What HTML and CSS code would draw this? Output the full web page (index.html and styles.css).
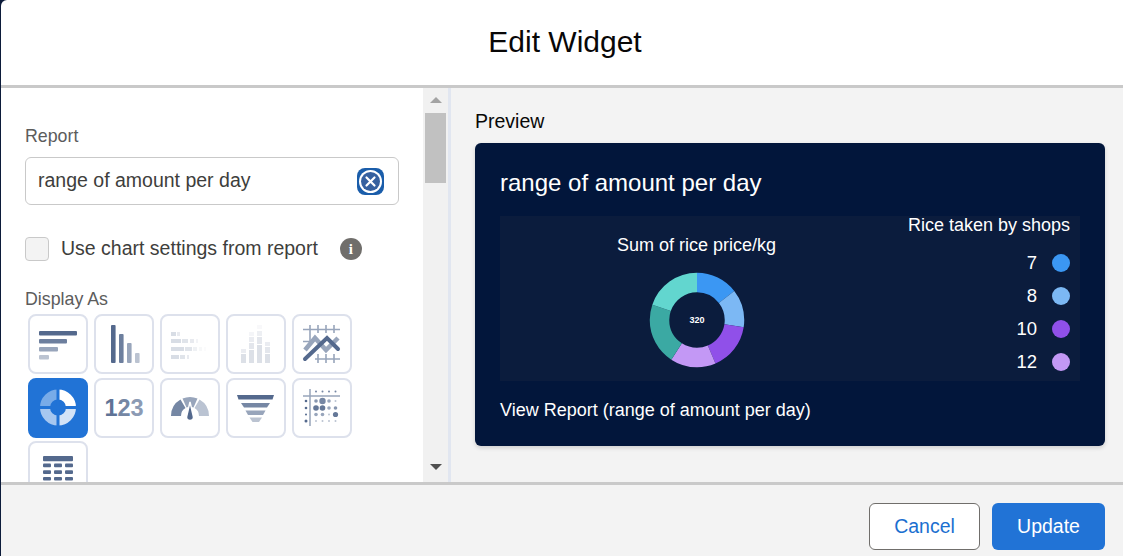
FILE: index.html
```html
<!DOCTYPE html>
<html lang="en">
<head>
    <meta charset="UTF-8">
    <meta name="viewport" content="width=device-width, initial-scale=1.0">
    <title>Edit Widget</title>
    <link rel="stylesheet" href="styles.css">
</head>
<body>
    <div class="modal">
        <div class="modal-header">Edit Widget</div>
        <div class="modal-body">
            <div class="settings">
                <label class="field-label">Report</label>
                <div class="report-input">
                    <span class="report-value">range of amount per day</span>
                    <button class="clear-button"><span class="clear-circle">
                        <svg width="13" height="13" viewBox="0 0 13 13"><path d="M2.5 2.5l8 8M10.5 2.5l-8 8" stroke="#fff" stroke-width="2.2" stroke-linecap="round"/></svg>
                    </span></button>
                </div>
                <div class="use-settings">
                    <span class="checkbox"></span>
                    <span class="use-settings-text">Use chart settings from report</span>
                    <span class="info-icon">i</span>
                </div>
                <div class="field-label display-label">Display As</div>
                <div class="chart-types">
                    <!-- bar -->
                    <div class="chart-type">
                        <svg viewBox="0 0 56 56" class="type-icon" fill="#54698d">
                            <rect x="9" y="15" width="38" height="4.6" rx="1"/>
                            <rect x="9" y="23" width="28" height="4.6" rx="1" opacity=".85"/>
                            <rect x="9" y="31" width="19" height="4.6" rx="1" opacity=".6"/>
                            <rect x="9" y="39" width="10" height="4.6" rx="1" opacity=".4"/>
                        </svg>
                    </div>
                    <!-- column -->
                    <div class="chart-type">
                        <svg viewBox="0 0 56 56" class="type-icon" fill="#54698d">
                            <rect x="15" y="9" width="4.6" height="38" rx="1"/>
                            <rect x="23" y="18" width="4.6" height="29" rx="1" opacity=".85"/>
                            <rect x="31" y="27" width="4.6" height="20" rx="1" opacity=".6"/>
                            <rect x="39" y="37" width="4.6" height="10" rx="1" opacity=".4"/>
                        </svg>
                    </div>
                    <!-- stacked bar -->
                    <div class="chart-type">
                        <svg viewBox="0 0 56 56" class="type-icon" fill="#54698d">
                            <g opacity=".22">
                                <rect x="9" y="16" width="5" height="4"/><rect x="15" y="16" width="3" height="4" opacity=".6"/>
                                <rect x="9" y="23" width="10" height="4"/><rect x="20" y="23" width="6" height="4" opacity=".8"/><rect x="28" y="23" width="4" height="4" opacity=".6"/><rect x="34" y="23" width="2" height="4" opacity=".3"/>
                                <rect x="9" y="31" width="13" height="4"/><rect x="23" y="31" width="7" height="4" opacity=".8"/><rect x="31" y="31" width="4" height="4" opacity=".4"/><rect x="37" y="31" width="3" height="4" opacity=".2"/><rect x="42" y="31" width="2" height="4" opacity=".1"/>
                                <rect x="9" y="39" width="8" height="4"/><rect x="18" y="39" width="5" height="4" opacity=".8"/><rect x="25" y="39" width="2" height="4" opacity=".6"/>
                            </g>
                        </svg>
                    </div>
                    <!-- stacked column -->
                    <div class="chart-type">
                        <svg viewBox="0 0 56 56" class="type-icon" fill="#54698d">
                            <g opacity=".2">
                                <rect x="13" y="38" width="5" height="9"/><rect x="13" y="33" width="5" height="4" opacity=".6"/>
                                <rect x="21" y="34" width="5" height="13"/><rect x="21" y="27" width="5" height="6" opacity=".8"/><rect x="21" y="21" width="5" height="5" opacity=".6"/><rect x="21" y="16" width="5" height="4" opacity=".3"/>
                                <rect x="29" y="29" width="5" height="18"/><rect x="29" y="21" width="5" height="7" opacity=".8"/><rect x="29" y="15" width="5" height="5" opacity=".5"/><rect x="29" y="9" width="5" height="4" opacity=".2"/>
                                <rect x="37" y="38" width="5" height="9"/><rect x="37" y="31" width="5" height="6" opacity=".8"/><rect x="37" y="26" width="5" height="4" opacity=".6"/>
                            </g>
                        </svg>
                    </div>
                    <!-- line -->
                    <div class="chart-type">
                        <svg viewBox="0 0 56 56" class="type-icon">
                            <g stroke="#98a5bb" stroke-width="1.6" fill="none">
                                <path d="M9 13.5h37M9 25.5h7M16 9v17M24 9v8M32 9v8M40 9v8"/>
                                <path d="M21 43h25M24 38v9M32 38v9M40 38v9"/>
                            </g>
                            <path d="M11 34L21 22L32 34L44 22" stroke="#98a5bb" stroke-width="4.5" fill="none"/>
                            <path d="M11 43L33 22L44 33" stroke="#54698d" stroke-width="4" fill="none" stroke-linecap="round"/>
                        </svg>
                    </div>
                    <!-- donut, selected -->
                    <div class="chart-type selected">
                        <svg viewBox="0 0 56 56" class="type-icon">
                            <g fill="none" stroke-width="10" transform="rotate(-90 28 27.5)">
                                <circle cx="28" cy="27.5" r="13" stroke="#fff" pathLength="4" stroke-dasharray="1 3"/>
                                <circle cx="28" cy="27.5" r="13" stroke="#d3e3f7" pathLength="4" stroke-dasharray="1 3" stroke-dashoffset="-1"/>
                                <circle cx="28" cy="27.5" r="13" stroke="#a6c7f0" pathLength="4" stroke-dasharray="1 3" stroke-dashoffset="-2"/>
                                <circle cx="28" cy="27.5" r="13" stroke="#78abe8" pathLength="4" stroke-dasharray="1 3" stroke-dashoffset="-3"/>
                            </g>
                            <path d="M28 8v39M8 27.5h40" stroke="#2173d6" stroke-width="3"/>
                        </svg>
                    </div>
                    <!-- metric -->
                    <div class="chart-type">
                        <svg viewBox="0 0 56 56" class="type-icon">
                            <text x="28" y="36" text-anchor="middle" class="metric-text"><tspan fill="#5f7396">1</tspan><tspan fill="#7587a4">2</tspan><tspan fill="#8c9bb4">3</tspan></text>
                        </svg>
                    </div>
                    <!-- gauge -->
                    <div class="chart-type">
                        <svg viewBox="0 0 56 56" class="type-icon">
                            <path d="M9 36a19 19 0 0 1 9.5-16.5l5 8.5a9 9 0 0 0-4.500 8z" fill="#7587a4"/>
                            <path d="M20.500 18.500a19 19 0 0 1 15 0l-4 9a9 9 0 0 0-7 0z" fill="#98a5bb"/>
                            <path d="M37.500 19.500a19 19 0 0 1 9.500 16.500h-10a9 9 0 0 0-4.500-8z" fill="#bac3d2"/>
                            <path d="M28 22l3.500 15a3.500 3.500 0 0 1-7 0z" fill="#54698d" stroke="#fff" stroke-width="1.500"/>
                        </svg>
                    </div>
                    <!-- funnel -->
                    <div class="chart-type">
                        <svg viewBox="0 0 56 56" class="type-icon" fill="#54698d">
                            <path d="M9 15h37l-1.500 4.500h-34z"/>
                            <path d="M13 23h29l-3 4.500h-23z" opacity=".8"/>
                            <path d="M17.500 30.500h20l-2.500 4.500h-15z" opacity=".6"/>
                            <path d="M21.500 37.500h12.500l-3 4.500h-6.500z" opacity=".4"/>
                        </svg>
                    </div>
                    <!-- scatter -->
                    <div class="chart-type">
                        <svg viewBox="0 0 56 56" class="type-icon" fill="#54698d">
                            <path d="M16 9v37M9 16h37" stroke="#98a5bb" stroke-width="1.500"/>
                            <g opacity=".8"><circle cx="22" cy="11.500" r="1"/><circle cx="28.500" cy="11.500" r="1"/><circle cx="35" cy="11.500" r="1"/><circle cx="41.500" cy="11.500" r="1"/></g>
                            <circle cx="12" cy="21" r="1.300"/><circle cx="22" cy="21" r="1.800" opacity=".7"/><circle cx="28.500" cy="21" r="3.200" opacity=".8"/><circle cx="35" cy="21" r="1.800" opacity=".6"/><circle cx="41.500" cy="21" r="1" opacity=".4"/>
                            <circle cx="12" cy="28" r="1.300"/><circle cx="22" cy="28" r="2.800" opacity=".9"/><circle cx="28.500" cy="28" r="2.800" opacity=".9"/><circle cx="35" cy="28" r="1.800" opacity=".6"/><circle cx="41.500" cy="28" r="1.800" opacity=".7"/>
                            <circle cx="12" cy="34.500" r="1"/><circle cx="22" cy="34.500" r="1.800" opacity=".6"/><circle cx="28.500" cy="34.500" r="1.800" opacity=".6"/><circle cx="35" cy="34.500" r="1" opacity=".4"/><circle cx="41.500" cy="34.500" r="2.600" opacity=".9"/>
                            <circle cx="12" cy="41" r="1.500"/><circle cx="22" cy="41" r="1" opacity=".4"/><circle cx="28.500" cy="41" r="1" opacity=".4"/><circle cx="35" cy="41" r="1" opacity=".4"/><circle cx="41.500" cy="41" r="1" opacity=".4"/>
                        </svg>
                    </div>
                    <!-- table -->
                    <div class="chart-type">
                        <svg viewBox="0 0 56 56" class="type-icon" fill="#54698d">
                            <rect x="13" y="13" width="30" height="5.300" rx="1"/>
                            <rect x="13" y="20.500" width="8" height="3.700" rx="1"/><rect x="24" y="20.500" width="8" height="3.700" rx="1"/><rect x="35" y="20.500" width="8" height="3.700" rx="1"/>
                            <rect x="13" y="27.200" width="8" height="3.700" rx="1"/><rect x="24" y="27.200" width="8" height="3.700" rx="1"/><rect x="35" y="27.200" width="8" height="3.700" rx="1"/>
                            <rect x="13" y="33.900" width="8" height="3.700" rx="1"/><rect x="24" y="33.900" width="8" height="3.700" rx="1"/><rect x="35" y="33.900" width="8" height="3.700" rx="1"/>
                            <rect x="13" y="40.600" width="8" height="3.700" rx="1"/><rect x="24" y="40.600" width="8" height="3.700" rx="1"/><rect x="35" y="40.600" width="8" height="3.700" rx="1"/>
                        </svg>
                    </div>
                </div>
            </div>
            <div class="scrollbar">
                <span class="arrow-up"></span>
                <span class="scroll-thumb"></span>
                <span class="arrow-down"></span>
            </div>
            <div class="preview">
                <div class="preview-label">Preview</div>
                <div class="widget-card">
                    <div class="widget-title">range of amount per day</div>
                    <div class="chart-area">
                        <div class="donut-panel">
                            <div class="donut-title">Sum of rice price/kg</div>
                            <svg class="donut" width="100" height="100" viewBox="0 0 100 100">
                                <g fill="none" stroke-width="19.500" transform="rotate(-90 50 50)">
                                    <circle cx="50" cy="50" r="37.500" stroke="#3b97f3" pathLength="360" stroke-dasharray="52 308"/>
                                    <circle cx="50" cy="50" r="37.500" stroke="#7cb8f4" pathLength="360" stroke-dasharray="47 313" stroke-dashoffset="-52"/>
                                    <circle cx="50" cy="50" r="37.500" stroke="#9050e9" pathLength="360" stroke-dasharray="58 302" stroke-dashoffset="-99"/>
                                    <circle cx="50" cy="50" r="37.500" stroke="#c398f5" pathLength="360" stroke-dasharray="56 304" stroke-dashoffset="-157"/>
                                    <circle cx="50" cy="50" r="37.500" stroke="#3ba9a3" pathLength="360" stroke-dasharray="76 284" stroke-dashoffset="-213"/>
                                    <circle cx="50" cy="50" r="37.500" stroke="#62d6cf" pathLength="360" stroke-dasharray="71 289" stroke-dashoffset="-289"/>
                                </g>
                                <text x="50" y="53" text-anchor="middle" class="donut-total">320</text>
                            </svg>
                        </div>
                        <div class="legend">
                            <div class="legend-title">Rice taken by shops</div>
                            <div class="legend-row"><span>7</span><i class="dot dot-1"></i></div>
                            <div class="legend-row"><span>8</span><i class="dot dot-2"></i></div>
                            <div class="legend-row"><span>10</span><i class="dot dot-3"></i></div>
                            <div class="legend-row"><span>12</span><i class="dot dot-4"></i></div>
                        </div>
                    </div>
                    <div class="view-report">View Report (range of amount per day)</div>
                </div>
            </div>
        </div>
        <div class="modal-footer">
            <button class="btn btn-cancel">Cancel</button>
            <button class="btn btn-update">Update</button>
        </div>
    </div>
</body>
</html>
```

FILE: styles.css
```css
* {
    margin: 0;
    padding: 0;
    box-sizing: border-box;
    font-family: "Liberation Sans", Arial, sans-serif;
}

body {
    background-color: #0c1b3a;
    height: 100vh;
    overflow: hidden;
}

.modal {
    margin-left: 1px;
    height: 100vh;
    display: flex;
    flex-direction: column;
    background-color: #fff;
    border-top-left-radius: 6px;
    overflow: hidden;
}

.modal-header {
    height: 88px;
    flex-shrink: 0;
    border-bottom: 3px solid #c9c9c9;
    padding: 0 0 2px 6px;
    display: flex;
    align-items: center;
    justify-content: center;
    font-size: 30px;
    color: #080707;
}

.modal-body {
    flex: 1;
    min-height: 0;
    display: flex;
}

/* left column */
.settings {
    width: 422px;
    flex-shrink: 0;
    overflow: hidden;
    padding: 38px 24px 0;
    background-color: #fff;
}

.field-label {
    display: block;
    font-size: 17.8px;
    line-height: 20px;
    color: #5c5c5c;
}

.report-input {
    margin-top: 11px;
    width: 374px;
    height: 48px;
    border: 1px solid #c9c9c9;
    border-radius: 6px;
    display: flex;
    align-items: center;
    justify-content: space-between;
    padding: 0 14px 0 12px;
    font-size: 19.5px;
    color: #3e3e3c;
}

.report-value {
    margin-bottom: 2px;
}

.clear-button {
    width: 27px;
    height: 27px;
    border: none;
    border-radius: 8px;
    background-color: #1a5daa;
    display: flex;
    align-items: center;
    justify-content: center;
}

.clear-circle {
    width: 19px;
    height: 19px;
    border-radius: 50%;
    background-color: #35609f;
    box-shadow: 0 0 0 2px #fff;
    display: flex;
    align-items: center;
    justify-content: center;
}

.use-settings {
    margin-top: 32px;
    display: flex;
    align-items: center;
    height: 24px;
}

.checkbox {
    width: 24px;
    height: 24px;
    border: 1px solid #c9c9c9;
    border-radius: 4px;
    background-color: #f3f3f3;
}

.use-settings-text {
    margin: 0 0 2px 12px;
    font-size: 19.5px;
    color: #3e3e3c;
}

.info-icon {
    margin: 0 0 1px 22px;
    width: 22px;
    height: 22px;
    border-radius: 50%;
    background-color: #706e6b;
    color: #fff;
    font-family: "Liberation Serif", serif;
    font-weight: bold;
    font-size: 15px;
    line-height: 22px;
    text-align: center;
}

.display-label {
    margin-top: 28px;
}

.chart-types {
    margin-top: 5px;
    margin-left: 3px;
    display: grid;
    grid-template-columns: repeat(5, 60px);
    grid-auto-rows: 60px;
    column-gap: 6px;
    row-gap: 3.5px;
}

.chart-type {
    border: 2px solid #dde1ec;
    border-radius: 8px;
    background-color: #fff;
}

.chart-type.selected {
    background-color: #2173d6;
    border-color: #2173d6;
}

.type-icon {
    display: block;
    width: 56px;
    height: 56px;
}

.metric-text {
    font-size: 23.5px;
    font-weight: bold;
}

/* scrollbar */
.scrollbar {
    width: 25px;
    flex-shrink: 0;
    background-color: #f1f1f1;
    display: flex;
    flex-direction: column;
    align-items: center;
    padding: 9px 0;
}

.arrow-up {
    border-left: 6px solid transparent;
    border-right: 6px solid transparent;
    border-bottom: 6px solid #a3a3a3;
}

.scroll-thumb {
    margin-top: 10px;
    width: 21px;
    height: 70px;
    background-color: #c1c1c1;
}

.arrow-down {
    margin-top: auto;
    margin-bottom: 3px;
    border-left: 6px solid transparent;
    border-right: 6px solid transparent;
    border-top: 6px solid #505050;
}

/* right column */
.preview {
    flex: 1;
    background-color: #f3f3f3;
    border-left: 3px solid #e1e6f0;
    padding: 22px 18px 0 24px;
}

.preview-label {
    font-size: 19.5px;
    line-height: 22px;
    color: #080707;
}

.widget-card {
    margin-top: 11px;
    height: 303px;
    background-color: #02163b;
    border-radius: 6px;
    box-shadow: 0 2px 4px rgba(0, 0, 0, 0.15);
    padding: 26px 25px 0;
    color: #fff;
}

.widget-title {
    font-size: 24px;
    line-height: 28px;
}

.chart-area {
    margin-top: 19px;
    height: 165px;
    background-color: #0b1c3d;
    display: flex;
    justify-content: space-between;
}

.donut-panel {
    width: 393px;
    display: flex;
    flex-direction: column;
    align-items: center;
    padding-top: 20px;
}

.donut-title {
    font-size: 18px;
    line-height: 19px;
}

.donut {
    margin-top: 15px;
}

.donut-total {
    font-size: 9px;
    font-weight: bold;
    fill: #fff;
}

.legend {
    padding: 0 10px 0 0;
    display: flex;
    flex-direction: column;
    align-items: flex-end;
}

.legend-title {
    font-size: 18px;
    line-height: 19px;
    margin-bottom: 11px;
}

.legend-row {
    height: 33px;
    display: flex;
    align-items: center;
    gap: 15px;
    font-size: 18.5px;
}

.dot {
    width: 18px;
    height: 18px;
    border-radius: 50%;
}

.dot-1 { background-color: #3b97f3; }
.dot-2 { background-color: #7cb8f4; }
.dot-3 { background-color: #9050e9; }
.dot-4 { background-color: #c398f5; }

.view-report {
    margin-top: 18px;
    font-size: 18px;
    line-height: 22px;
}

/* footer */
.modal-footer {
    height: 74px;
    flex-shrink: 0;
    background-color: #f3f3f3;
    border-top: 3px solid #c9c9c9;
    display: flex;
    justify-content: flex-end;
    gap: 12px;
    padding: 18px 18px 0 0;
}

.btn {
    height: 47px;
    border-radius: 6px;
    font-size: 19.5px;
}

.btn-cancel {
    width: 111px;
    background-color: #fff;
    border: 1px solid #706e6b;
    color: #1b6fd0;
}

.btn-update {
    width: 113px;
    background-color: #2173d6;
    border: none;
    color: #fff;
}
```
